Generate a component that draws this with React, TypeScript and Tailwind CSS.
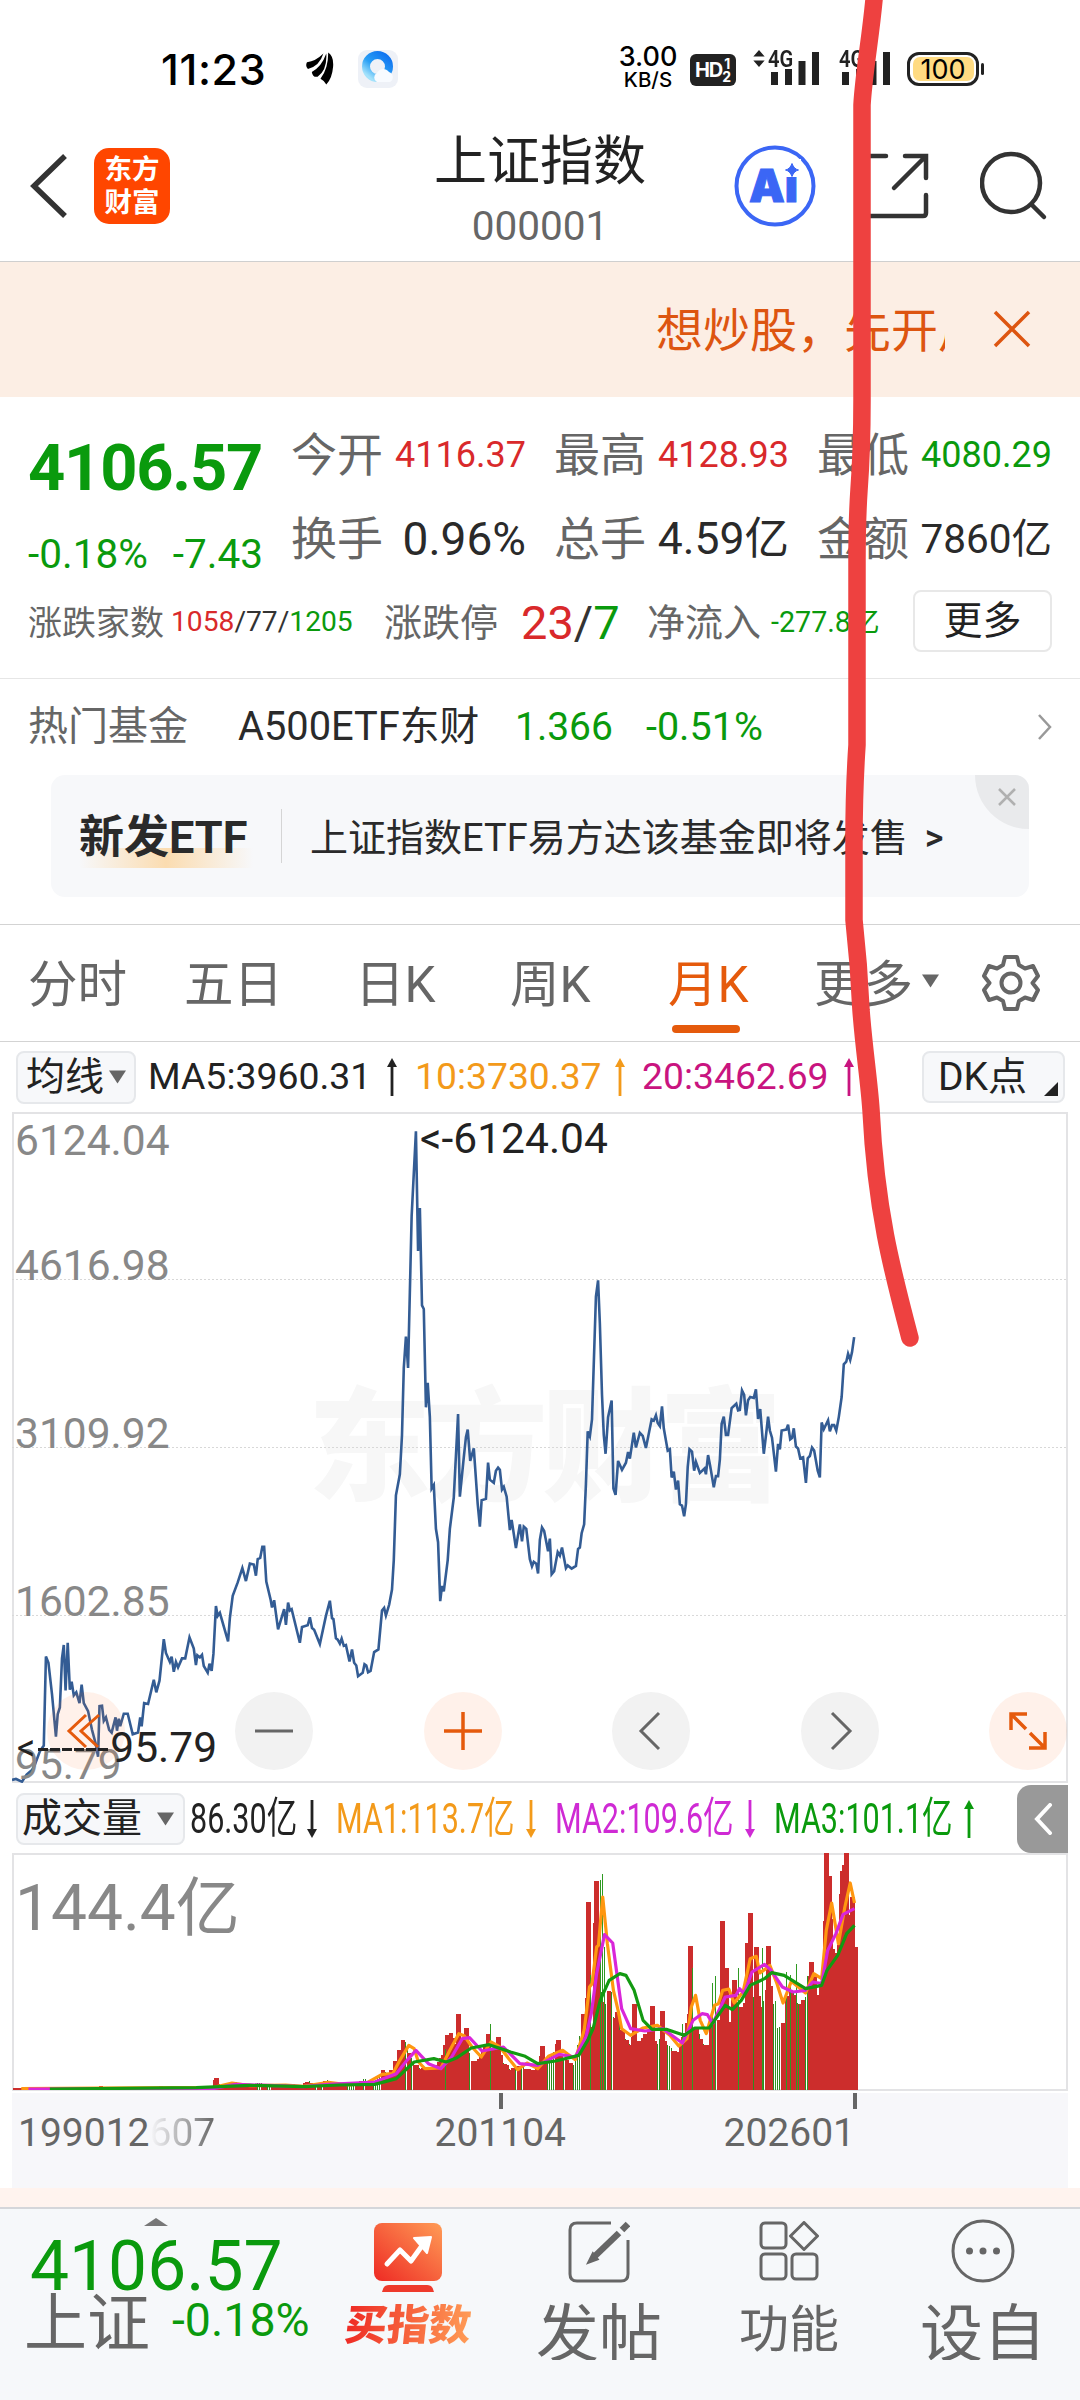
import React from 'react';

type Point = [number, number];

// Canvas units: 2.8 per px across, 2.24 (price) and 3 (volume) per px down
const HALF = 1456;

const join = (early: Point[], late: Point[]): Point[] => [
  ...early,
  ...late.map(([x, y]): Point => [x + HALF, y]),
];

const toPoints = (points: Point[]) => points.map((p) => p.join(',')).join(' ');

const PRICE = join(
  [
    [34, 1522], [45, 1520], [62, 1526], [75, 1510], [90, 1500], [98, 1488], [112, 1458], [123, 1445], [129, 1246], [136, 1260],
    [146, 1330], [157, 1425], [162, 1375], [168, 1360], [174, 1250], [179, 1220], [184, 1322], [190, 1215], [196, 1320], [201, 1302],
    [207, 1333], [214, 1326], [223, 1350], [229, 1309], [235, 1350], [247, 1368], [258, 1410], [268, 1440], [275, 1470], [279, 1357],
    [286, 1356], [291, 1390], [297, 1382], [306, 1410], [313, 1416], [324, 1382], [328, 1412], [333, 1385], [337, 1402], [347, 1374],
    [358, 1374], [372, 1420], [387, 1416], [393, 1382], [397, 1402], [404, 1350], [415, 1352], [431, 1298], [438, 1326], [447, 1300],
    [459, 1207], [465, 1238], [476, 1258], [481, 1246], [487, 1280], [493, 1258], [499, 1270], [510, 1250], [519, 1250], [531, 1203],
    [543, 1228], [549, 1265], [553, 1243], [560, 1248], [566, 1242], [571, 1267], [582, 1282], [587, 1262], [593, 1278], [598, 1240],
    [605, 1133], [610, 1155], [616, 1148], [639, 1212], [644, 1160], [652, 1110], [666, 1080], [679, 1048], [689, 1077], [700, 1038],
    [711, 1040], [717, 1065], [722, 1028], [729, 1025], [735, 1000], [740, 1000], [746, 1078], [758, 1118], [762, 1136], [768, 1120],
    [779, 1185], [796, 1140], [801, 1175], [807, 1125], [812, 1143], [817, 1140], [840, 1215], [846, 1180], [862, 1176], [868, 1158],
    [874, 1182], [880, 1186], [896, 1218], [913, 1155], [924, 1121], [930, 1160], [934, 1162], [941, 1205], [946, 1208], [952, 1217],
    [957, 1206], [963, 1222], [969, 1220], [979, 1257], [986, 1230], [992, 1260], [998, 1266], [1003, 1290], [1016, 1282], [1021, 1263],
    [1026, 1266], [1031, 1281], [1038, 1278], [1048, 1236], [1060, 1230], [1070, 1143], [1076, 1137], [1081, 1154], [1090, 1130], [1098, 1096],
    [1103, 1030], [1109, 885], [1120, 838], [1126, 750], [1131, 600], [1137, 530], [1143, 600], [1148, 430], [1153, 260], [1165, 70],
    [1171, 338], [1176, 242], [1182, 460], [1187, 468], [1193, 688], [1198, 633], [1204, 710], [1209, 870], [1215, 862], [1221, 960],
    [1227, 990], [1233, 1122], [1238, 1088], [1243, 1100], [1254, 1030], [1260, 960], [1271, 890], [1283, 703], [1288, 888], [1299, 800],
    [1305, 755], [1310, 738], [1317, 808], [1327, 780], [1338, 905], [1344, 955], [1349, 896], [1361, 893], [1367, 812], [1372, 850],
    [1383, 857], [1389, 830], [1395, 823], [1400, 828], [1406, 872], [1411, 866], [1419, 888], [1428, 963], [1433, 940], [1445, 1003],
    [1456, 950],
  ],
  [
    [6, 988], [11, 955], [18, 960], [28, 1028], [34, 1044], [39, 1034], [46, 1038], [51, 1060], [56, 985], [62, 957],
    [68, 965], [79, 1010], [84, 982], [89, 1062], [96, 1055], [106, 1012], [112, 1020], [118, 1002], [129, 1048], [134, 1042],
    [145, 1049], [157, 1043], [163, 1005], [168, 1002], [173, 970], [180, 950], [185, 860], [190, 742], [196, 753], [202, 715],
    [213, 440], [219, 404], [224, 500], [230, 660], [235, 750], [240, 792], [247, 710], [257, 673], [262, 870], [268, 884],
    [275, 808], [286, 828], [297, 812], [303, 788], [308, 803], [319, 745], [325, 778], [336, 745], [344, 752], [353, 779],
    [369, 715], [375, 718], [381, 706], [386, 723], [392, 730], [398, 686], [403, 735], [414, 785], [420, 782], [425, 845],
    [431, 832], [437, 872], [443, 852], [448, 905], [454, 908], [460, 932], [465, 905], [470, 822], [475, 782], [482, 787],
    [488, 830], [493, 810], [504, 835], [517, 825], [521, 838], [527, 795], [533, 820], [543, 867], [549, 842], [555, 842],
    [560, 805], [565, 725], [571, 709], [577, 750], [583, 750], [593, 690], [606, 680], [611, 695], [616, 694], [622, 650],
    [628, 660], [633, 706], [639, 672], [645, 665], [655, 667], [661, 648], [667, 714], [673, 692], [683, 792], [690, 745],
    [695, 709], [700, 740], [706, 756], [717, 832], [723, 770], [728, 782], [733, 740], [746, 738], [751, 727], [757, 760],
    [762, 757], [767, 735], [773, 776], [779, 780], [785, 802], [793, 800], [801, 857], [806, 802], [812, 797], [818, 778],
    [824, 785], [834, 830], [840, 845], [845, 722], [851, 737], [857, 727], [863, 717], [868, 742], [874, 728], [880, 728],
    [886, 740], [893, 710], [901, 665], [907, 592], [914, 586], [919, 568], [925, 582], [930, 565], [936, 531],
  ],
);

// Top outline of the turnover bars, as [x, height]
const TURNOVER = join(
  [
    [34, 5], [160, 5], [270, 5], [282, 12], [300, 5], [450, 10], [480, 6], [590, 7], [605, 34], [618, 12], [657, 24],
    [680, 11], [728, 24], [750, 10], [795, 20], [845, 12], [865, 30], [880, 10], [918, 32], [935, 16], [960, 18],
    [985, 10], [1008, 24], [1020, 40], [1035, 16], [1060, 42], [1071, 64], [1090, 44], [1108, 95], [1117, 128], [1134, 158],
    [1143, 130], [1155, 90], [1175, 70], [1200, 62], [1225, 80], [1238, 100], [1255, 178], [1268, 174], [1276, 140], [1284, 150],
    [1292, 140], [1306, 170], [1318, 90], [1340, 90], [1366, 150], [1378, 110], [1396, 150], [1406, 90], [1432, 62],
    [1456, 80],
  ],
  [
    [20, 64], [40, 60], [62, 120], [70, 84], [84, 114], [108, 140], [118, 100], [150, 80], [162, 160], [174, 208],
    [182, 280], [192, 300], [199, 200], [206, 460], [213, 530], [222, 500], [228, 290], [245, 270], [253, 350], [262, 220],
    [275, 240], [284, 180], [300, 155], [313, 140], [320, 180], [328, 140], [352, 170], [370, 200], [380, 140], [399, 190],
    [407, 150], [420, 140], [445, 110], [466, 200], [477, 240], [485, 190], [495, 200], [520, 130], [545, 235], [560, 220],
    [567, 300], [576, 300], [582, 200], [600, 310], [610, 250], [630, 280], [642, 430], [653, 300], [661, 360], [672, 270],
    [687, 300], [696, 350], [706, 300], [720, 200], [735, 210], [750, 300], [768, 320], [785, 240], [800, 310], [815, 370],
    [824, 370], [833, 280], [848, 330], [857, 600], [866, 600], [874, 480], [890, 385], [901, 655], [914, 660], [922, 520],
    [930, 580], [940, 427],
  ],
);

// Single months that stand clear of their neighbours
const PEAKS: Point[] = [
  [605, 34], [1284, 226], [1306, 186], [1367, 168], [1396, 158], [1518, 132], [1564, 150], [1648, 562], [1669, 625],
  [1776, 256], [1826, 250], [1855, 236], [1933, 430], [2023, 506], [2032, 364], [2056, 328], [2093, 440], [2101, 530],
  [2117, 428], [2152, 432], [2271, 382], [2313, 710], [2322, 640], [2357, 655], [2363, 674], [2370, 710], [2386, 578],
  [2395, 427],
];

// Down months tall enough to rise over the red ones
const SPIKES: Point[] = [
  [1245, 122], [1373, 198], [1653, 345], [1681, 630], [1687, 648], [1692, 428], [1911, 196], [1939, 366], [1995, 320],
  [2001, 342], [2067, 364], [2135, 426], [2202, 354], [2213, 344], [2230, 378], [2259, 342], [2169, 266], [2235, 256],
];

const MA_ORANGE = join(
  [
    [60, 1225], [600, 1221], [650, 1208], [700, 1216], [800, 1214], [850, 1218], [920, 1206], [980, 1214], [1030, 1206], [1070, 1182],
    [1100, 1180], [1120, 1140], [1145, 1095], [1160, 1105], [1172, 1145], [1190, 1165], [1235, 1163], [1260, 1110], [1285, 1060],
    [1300, 1066], [1322, 1100], [1348, 1130], [1375, 1085], [1400, 1100], [1425, 1135], [1450, 1168],
  ],
  [
    [20, 1148], [50, 1165], [80, 1128], [120, 1110], [155, 1138], [180, 1050], [195, 920], [202, 910], [215, 800], [220, 795],
    [232, 650], [245, 790], [262, 930], [275, 990], [285, 1045], [310, 1065], [345, 1043], [385, 1035], [420, 1065], [445, 1097],
    [468, 1075], [480, 980], [492, 945], [505, 1020], [522, 1060], [545, 975], [556, 970], [568, 930], [585, 926], [600, 968],
    [625, 935], [645, 835], [662, 828], [672, 878], [685, 868], [700, 855], [720, 910], [737, 968], [760, 903], [800, 938],
    [823, 880], [845, 895], [858, 750], [873, 668], [892, 790], [910, 680], [925, 608], [937, 668],
  ],
);

const MA_MAGENTA = join(
  [
    [80, 1226], [600, 1224], [660, 1212], [850, 1219], [920, 1212], [1050, 1205], [1110, 1180], [1140, 1140], [1165, 1110], [1200, 1150],
    [1235, 1165], [1265, 1130], [1295, 1075], [1315, 1072], [1350, 1112], [1410, 1100],
  ],
  [
    [0, 1150], [50, 1155], [110, 1122], [155, 1130], [185, 1070], [200, 1000], [215, 880], [237, 763], [260, 788], [285, 985],
    [310, 1045], [350, 1052], [400, 1045], [455, 1088], [485, 1020], [510, 1000], [525, 1003], [540, 1030], [575, 950], [605, 945],
    [615, 925], [628, 940], [650, 875], [685, 852], [702, 868], [735, 920], [765, 935], [800, 930], [820, 905], [845, 910],
    [862, 810], [885, 760], [905, 702], [937, 685],
  ],
);

const MA_GREEN = join(
  [
    [140, 1226], [550, 1222], [700, 1215], [850, 1219], [950, 1214], [1050, 1212], [1110, 1195], [1160, 1145], [1215, 1135], [1250, 1145],
    [1280, 1132], [1320, 1103], [1370, 1093], [1430, 1115],
  ],
  [
    [15, 1128], [50, 1150], [100, 1142], [165, 1125], [190, 1080], [205, 1045], [225, 960], [250, 900], [280, 880], [297, 885],
    [320, 930], [345, 1020], [370, 1047], [410, 1047], [460, 1065], [490, 1043], [530, 1043], [575, 975], [595, 988], [620, 960],
    [645, 915], [685, 895], [705, 877], [740, 885], [800, 925], [845, 915], [860, 870], [890, 825], [915, 760], [937, 735],
  ],
);

const heightAt = (x: number) => {
  const i = TURNOVER.findIndex((p) => p[0] >= x);
  if (i <= 0) return TURNOVER[i === 0 ? 0 : TURNOVER.length - 1][1];
  const [x0, h0] = TURNOVER[i - 1];
  const [x1, h1] = TURNOVER[i];
  return h0 + ((h1 - h0) * (x - x0)) / (x1 - x0);
};

const BARS = Array.from({ length: 421 }, (_, i) => {
  const x = 36.8 + i * 5.6;
  const down = (i * 7919 + i * i * 31) % 100 < 40 && i < 400;
  const dip = down ? 0.92 : 0.9 + ((i * 37) % 11) / 100;
  return { x, down, h: heightAt(x) * dip };
});

const snap = (x: number) => 34 + Math.round((x - 34) / 2.8) * 2.8;

const QUOTES = [
  ['今开', '4116.37', 'text-[#d9292b] text-[36px]'],
  ['最高', '4128.93', 'text-[#d9292b] text-[36px]'],
  ['最低', '4080.29', 'text-[#0a9a0d] text-[36px]'],
  ['换手', '0.96%', 'text-[#2a2a2a] text-[46px]'],
  ['总手', '4.59亿', 'text-[#2a2a2a] text-[44.500px]'],
  ['金额', '7860亿', 'text-[#2a2a2a] text-[40.500px]'],
];

const Caret = ({ className = '' }: { className?: string }) => (
  <svg viewBox="0 0 18 14" className={`h-[14px] w-[17px] shrink-0 ${className}`}>
    <path d="M0 0h18L9 14z" fill="#666" />
  </svg>
);

const Arrow = ({ up = false }: { up?: boolean }) => (
  <svg viewBox="0 0 12 38" className={`h-[38px] w-3 shrink-0 ${up ? '' : 'rotate-180'}`} fill="none">
    <path d="M6 4v34" stroke="currentColor" strokeWidth="2.8" />
    <path d="M6 0l5 9H1z" fill="currentColor" />
  </svg>
);

const Signal = ({ arrows = false }: { arrows?: boolean }) => (
  <div className="relative h-9 w-[50px]">
    <span className="absolute -left-[1px] -top-[4px] origin-left scale-x-[0.84] text-[24px] font-semibold leading-6 text-[#222]">4G</span>
    <svg viewBox="0 0 50 36" className="h-9 w-[50px]" fill="#222">
      <path d="M2 21h7v13H2zM16 18h7v16h-7zM29.500 10h7v24h-7zM43 1h7v33h-7z" />
    </svg>
    {arrows && (
      <svg viewBox="0 0 12 18" className="absolute -left-4 -top-px h-[17px] w-[12px]" fill="#222">
        <path d="M6 0l6 7H0zM6 18l6-7H0z" />
      </svg>
    )}
  </div>
);

const StatusBar = () => (
  <div className="flex h-[108px] items-center pl-[161px] pt-[30px] pr-[101px]">
    <span className="w-[108px] font-['Inter'] text-[43px] font-medium leading-none tracking-[0.6px] text-black">11:23</span>
    <svg viewBox="0 0 30 34" className="ml-[37px] h-[34px] w-[29px]" fill="#000">
      <path d="M1 10Q10 9 18 1Q14 14 2 17Q-1 14 1 10zM6 20Q16 15 21 1Q22 18 12 25Q7 26 6 20zM15 27Q23 17 23 0Q29 4 28 15Q27 27 21 33Q19 29 15 27z" />
    </svg>
    <svg viewBox="0 0 40 40" className="ml-[23px] h-10 w-10">
      <defs>
        <linearGradient id="cloud" x1="1" y1="0" x2="0.2" y2="1">
          <stop offset="0" stopColor="#0d6ff0" />
          <stop offset="0.6" stopColor="#2aa0f5" />
          <stop offset="1" stopColor="#a4e2fb" />
        </linearGradient>
      </defs>
      <rect width="40" height="38" y="1" rx="9" fill="#eef1f7" />
      <circle cx="19.500" cy="17.500" r="11.500" fill="none" stroke="url(#cloud)" strokeWidth="8" />
      <path d="M19 33a5 5 0 010-9 7 7 0 0112-1 5.500 5.500 0 011 10z" fill="#f8fbff" />
    </svg>
    <div className="flex-1" />
    <div className="mr-[12px] w-[60px] text-center font-['Inter'] font-medium text-black">
      <div className="-mt-[3px] text-[27px] leading-[24px]">3.00</div>
      <div className="text-[20.500px] leading-[21px]">KB/S</div>
    </div>
    <div className="mr-[33px] mt-[2px] flex h-[32px] w-[46px] items-center justify-center rounded-md bg-[#222] text-white">
      <span className="font-['Inter'] text-[20px] font-bold leading-none tracking-[-1px]">HD</span>
      <span className="flex flex-col font-['Inter'] text-[14px] font-bold leading-[13px]">
        <span className="pl-[2px]">1</span>
        <span>2</span>
      </span>
    </div>
    <Signal arrows />
    <div className="w-[21px]" />
    <Signal />
    <div className="relative ml-[17px] flex h-[34px] w-[72px] items-center justify-center rounded-[12px] border-[3px] border-[#222] bg-white">
      <div className="flex h-6 w-[61px] items-center justify-center rounded-[7px] bg-[#ffdb82] font-['Inter'] text-[27px] leading-none text-black">
        100
      </div>
      <div className="absolute -right-[8px] top-[8px] h-3 w-[3px] rounded bg-[#222]" />
    </div>
  </div>
);

const Header = () => (
  <header className="flex h-[154px] border-b border-[#cfcfcf] pl-[30px]">
    <svg viewBox="0 0 38 64" className="mt-[46px] h-16 w-[38px]" fill="none" stroke="#333" strokeWidth="5.500">
      <path d="M35 2L4 32l31 30" />
    </svg>
    <div className="ml-[26px] mt-[40px] flex h-[76px] w-[76px] flex-col items-center justify-center rounded-[15px] bg-[#ff4600] text-[27.500px] font-bold leading-[33px] text-white">
      <span>东方</span>
      <span>财富</span>
    </div>
    <div className="ml-[240px] flex w-[260px] flex-col items-center">
      <div className="mt-[25px] text-[53px] leading-[58px] text-[#222]">上证指数</div>
      <div className="mt-[12px] text-[40.500px] leading-[46px] text-[#666]">000001</div>
    </div>
    <svg viewBox="0 0 82 82" className="ml-[64px] mt-[37px] h-[82px] w-[82px]" fill="#3b66f5">
      <circle cx="41" cy="41" r="38.500" fill="none" stroke="#3b66f5" strokeWidth="4" />
      <text x="15" y="57" fontSize="45" fontWeight="900" fontFamily="Inter" stroke="#3b66f5" strokeWidth="1">
        Ai
      </text>
      <path d="M47 14h20v18H47z" fill="#fff" />
      <path d="M58 18.500q2 5.500 6.500 6.500-4.500 1-6.500 6.500-2-5.500-6.500-6.500 4.500-1 6.500-6.500z" stroke="#3b66f5" />
    </svg>
    <svg viewBox="0 0 68 68" className="ml-[47px] mt-[45px] h-[68px] w-[68px]" fill="none" stroke="#333" strokeWidth="4.500" strokeLinecap="round">
      <path d="M23 3H6Q3 3 3 6v54q0 3 3 3h54q3 0 3-3V42M42 3h21v22M62 4L31 35" />
    </svg>
    <svg viewBox="0 0 70 70" className="ml-[49px] mt-[43px] h-[70px] w-[70px]" fill="none" stroke="#333" strokeWidth="4.500" strokeLinecap="round">
      <circle cx="31" cy="32" r="29" />
      <path d="M52 54l12 12" />
    </svg>
  </header>
);

const NoticeBar = () => (
  <div className="flex h-[135px] items-center bg-[#fceee4] pl-[656px] text-[#dd5510]">
    <div className="mt-[3px] w-[289px] overflow-hidden whitespace-nowrap text-[47px] leading-[60px]">想炒股，先开户</div>
    <svg viewBox="0 0 38 38" className="ml-[48px] mt-[-2px] h-[38px] w-[38px]" fill="none" stroke="currentColor" strokeWidth="3.500">
      <path d="M2 2l34 34M36 2L2 36" />
    </svg>
  </div>
);

const Quote = () => (
  <section className="h-[282px] border-b border-[#e6e6e6] pl-[28px] pr-[28px] leading-none">
    <div className="flex">
      <div className="w-[263px] text-[#0a9a0d]">
        <div className="mt-[38px] text-[65px] font-bold leading-[66px] tracking-[-1.200px]">4106.57</div>
        <div className="mt-[31px] flex w-[235px] justify-between text-[40.500px] leading-[44px]">
          <span>-0.18%</span>
          <span>-7.43</span>
        </div>
      </div>
      <div className="mt-[16px] grid grid-cols-[235px_235px_235px] gap-x-[28px]">
        {QUOTES.map(([label, value, style]) => (
          <div key={label} className="flex h-[84px] items-center justify-between whitespace-nowrap">
            <span className="text-[46px] text-[#666]">{label}</span>
            <span className={style}>{value}</span>
          </div>
        ))}
      </div>
    </div>
    <div className="mt-[8px] flex h-[64px] items-center whitespace-nowrap text-[#666]">
      <span className="mt-[4px] w-[143px] text-[34px]">涨跌家数</span>
      <span className="mt-[2px] w-[213px] text-[28.200px] text-[#333]">
        <span className="text-[#d9292b]">1058</span>/77/<span className="text-[#0a9a0d]">1205</span>
      </span>
      <span className="mt-[3px] w-[137px] text-[38px]">涨跌停</span>
      <span className="mt-[2px] w-[126px] text-[47px] text-[#333]">
        <span className="text-[#d9292b]">23</span>/<span className="text-[#0a9a0d]">7</span>
      </span>
      <span className="mt-[3px] w-[124px] text-[38px]">净流入</span>
      <span className="mt-[2px] w-[142px] text-[28.700px] text-[#0a9a0d]">-277.8亿</span>
      <button className="flex h-[62px] w-[139px] items-center justify-center rounded-lg border-2 border-[#e8e8e8] text-[39px] text-[#222]">
        更多
      </button>
    </div>
  </section>
);

const HotFunds = () => (
  <section className="h-[246px] border-b border-[#d3d3d3]">
    <div className="flex h-[96px] items-center whitespace-nowrap pl-[28px] pr-[28px] text-[40px] leading-none text-[#0a9a0d]">
      <span className="w-[210px] text-[#666]">热门基金</span>
      <span className="w-[277px] text-[39.800px] text-[#2a2a2a]">A500ETF东财</span>
      <span className="w-[131px] text-[39px]">1.366</span>
      <span className="flex-1 text-[39.500px]">-0.51%</span>
      <svg viewBox="0 0 14 26" className="h-[26px] w-[14px]" fill="none" stroke="#999" strokeWidth="2.500">
        <path d="M1 1l11 12L1 25" />
      </svg>
    </div>
    <div className="relative ml-[51px] flex h-[122px] w-[978px] items-center overflow-hidden whitespace-nowrap rounded-[14px] bg-[#f7f8fa] pt-[4px] text-[#2a2a2a]">
      <div className="relative ml-[28px] w-[174px] text-[45px] font-bold leading-[56px]">
        <div className="absolute inset-x-0 bottom-[-2px] h-5 bg-[linear-gradient(90deg,#f7f8fa_0%,#fbdcb0_50%,#f7f8fa_100%)]" />
        <span className="relative">新发ETF</span>
      </div>
      <div className="-mt-[4px] ml-[28px] h-[54px] w-px bg-[#d5d5d5]" />
      <span className="ml-[28px] text-[38px]">上证指数ETF易方达该基金即将发售</span>
      <span className="ml-[17px] text-[36px] font-medium">&gt;</span>
      <div className="absolute right-0 top-0 h-[54px] w-[54px] rounded-bl-[54px] bg-[#e9eaec]">
        <svg viewBox="0 0 18 18" className="ml-[23px] mt-[13px] h-[18px] w-[18px]" stroke="#b0b0b0" strokeWidth="2.500">
          <path d="M1 1l16 16M17 1L1 17" />
        </svg>
      </div>
    </div>
  </section>
);

const PeriodTabs = () => (
  <nav className="flex h-[117px] items-center whitespace-nowrap border-b border-[#d3d3d3] pl-[28px] text-[49.500px] leading-none text-[#666]">
    <span className="mt-[6px] w-[156px]">分时</span>
    <span className="mt-[6px] w-[171px]">五日</span>
    <span className="mt-[6px] w-[155px]">日K</span>
    <span className="mt-[6px] w-[158px]">周K</span>
    <span className="relative mt-[6px] w-[146px] text-[#e55a0c]">
      月K
      <span className="absolute -bottom-[22px] left-[4px] h-2 w-[68px] rounded-full bg-[#e55a0c]" />
    </span>
    <span className="mt-[6px] w-[108px]">更多</span>
    <Caret className="-mt-1" />
    <svg viewBox="0 0 58 58" className="ml-[43px] h-[58px] w-[58px]" fill="none" stroke="#666" strokeWidth="4" strokeLinejoin="round">
      <path d="M23 3h12l2 8 6 3.500 8-2.500 5 10-5.500 7 5.500 7-5 10-8-2.500L37 47l-2 8H23l-2-8-6-3.500L7 46 2 36l5.500-7L2 22 7 12l8 2.500L21 11z" />
      <circle cx="29" cy="29" r="9.500" />
    </svg>
  </nav>
);

const AverageBar = () => (
  <div className="flex h-[70px] items-center whitespace-nowrap pl-[16px] leading-none text-[#222]">
    <div className="flex h-[53px] w-[120px] shrink-0 items-center rounded-lg border-2 border-[#e6e8eb] bg-[#f7f8fa] pl-[8px] text-[39px]">
      均线
      <Caret className="ml-[5px]" />
    </div>
    <div className="ml-[12px] flex w-[250px] items-center justify-between text-[37.400px]">
      <span>MA5:3960.31</span>
      <Arrow up />
    </div>
    <div className="ml-[17px] flex w-[211px] items-center justify-between text-[37.300px] text-[#f39a1a]">
      <span>10:3730.37</span>
      <Arrow up />
    </div>
    <div className="ml-[16px] flex w-[213px] items-center justify-between text-[37.300px] text-[#c9147f]">
      <span>20:3462.69</span>
      <Arrow up />
    </div>
    <div className="relative ml-[67px] flex h-[52px] w-[143px] shrink-0 items-center rounded-lg border-2 border-[#e6e8eb] bg-[#f7f8fa] pl-[14px] text-[39px]">
      DK点
      <svg viewBox="0 0 14 14" className="absolute bottom-[5px] right-[5px] h-[14px] w-[14px]">
        <path d="M14 0v14H0z" fill="#222" />
      </svg>
    </div>
  </div>
);

const RoundButton = ({ orange = false, children }: { orange?: boolean; children: React.ReactNode }) => (
  <div
    className={`flex h-[78px] w-[78px] items-center justify-center rounded-full ${
      orange ? 'bg-[#ff7a33]/10 text-[#e55a0c]' : 'bg-[#f2f2f2] text-[#666]'
    }`}
  >
    <svg viewBox="0 0 40 40" className="h-10 w-10" fill="none" stroke="currentColor" strokeWidth="3">
      {children}
    </svg>
  </div>
);

const PriceChart = () => (
  <div className="relative ml-[12px] h-[671px] w-[1056px] border-2 border-[#e3e3e5] text-[42.500px] leading-none text-[#888]">
    <div className="absolute left-[294px] top-[274px] text-[123px] font-black tracking-[-6px] text-[#f7f7f7]">东方财富</div>
    <svg viewBox="34 27 2954 1502" preserveAspectRatio="none" className="absolute -left-[2px] -top-[2px] h-[671px] w-[1055px]" fill="none">
      <g stroke="#d8d8d8" strokeDasharray="2 2">
        <path d="M34 402H2988M34 778H2988M34 1154H2988" vectorEffect="non-scaling-stroke" />
      </g>
      <polyline points={toPoints(PRICE)} stroke="#335c94" strokeWidth="2.600" vectorEffect="non-scaling-stroke" />
    </svg>
    <span className="absolute left-[1px] top-[6px]">6124.04</span>
    <span className="absolute left-[1px] top-[131px]">4616.98</span>
    <span className="absolute left-[1px] top-[299px]">3109.92</span>
    <span className="absolute left-[1px] top-[467px]">1602.85</span>
    <span className="absolute left-[1px] top-[630px]">95.79</span>
    <span className="absolute left-[406px] top-[4px] text-[#222]">&lt;-6124.04</span>
    <div className="absolute -right-[1px] left-[33px] top-[578px] flex justify-between">
      <RoundButton orange>
        <path d="M20 4L3 20l17 16M33 4L15 20l17 16" />
      </RoundButton>
      <RoundButton>
        <path d="M1 20h38" />
      </RoundButton>
      <RoundButton orange>
        <path d="M1 20h38M20 1v38" strokeWidth="3.500" />
      </RoundButton>
      <RoundButton>
        <path d="M28 2L10 20l18 18" />
      </RoundButton>
      <RoundButton>
        <path d="M12 2l18 18-18 18" />
      </RoundButton>
      <RoundButton orange>
        <path d="M3 19V3h16M3 3l15 15M37 21v16H21M37 37L22 22" strokeWidth="3.500" />
      </RoundButton>
    </div>
    <div className="absolute left-[3px] top-[613px] flex items-center whitespace-nowrap text-[#222]">
      <span className="text-[36px]">&lt;</span>
      <span className="ml-[3px] mt-[2px] h-[3px] w-[72px] bg-[repeating-linear-gradient(90deg,#222_0_10px,transparent_10px_12px)]" />
      <span>95.79</span>
    </div>
  </div>
);

const Narrow = ({ className, children }: { className: string; children: React.ReactNode }) => (
  <div className={`flex h-full items-center whitespace-nowrap ${className}`}>
    <span className="origin-left scale-x-[0.71] text-[43px]">{children}</span>
  </div>
);

const TurnoverBar = () => (
  <div className="flex h-[70px] items-center pl-[16px] pt-px leading-none text-[#222]">
    <div className="flex h-[52px] w-[169px] shrink-0 items-center whitespace-nowrap rounded-lg border-2 border-[#e6e8eb] bg-[#f7f8fa] pl-[4px] text-[40px]">
      成交量
      <Caret className="ml-[15px]" />
    </div>
    <Narrow className="ml-[5px] w-[116px]">86.30亿</Narrow>
    <Arrow />
    <div className="flex h-full items-center text-[#f39a1a]">
      <Narrow className="ml-[18px] w-[189px]">MA1:113.7亿</Narrow>
      <Arrow />
    </div>
    <div className="flex h-full items-center text-[#cf2ad4]">
      <Narrow className="ml-[18px] w-[189px]">MA2:109.6亿</Narrow>
      <Arrow />
    </div>
    <div className="flex h-full items-center text-[#0a9a0d]">
      <Narrow className="ml-[18px] w-[189px]">MA3:101.1亿</Narrow>
      <Arrow up />
    </div>
    <div className="ml-[42px] flex h-[68px] w-[51px] shrink-0 items-center justify-center rounded-l-[14px] bg-[#999]">
      <svg viewBox="0 0 20 32" className="h-8 w-5" fill="none" stroke="#fff" strokeWidth="4" strokeLinecap="round">
        <path d="M17 2L4 16l13 14" />
      </svg>
    </div>
  </div>
);

const TurnoverChart = () => (
  <div className="relative ml-[12px] h-[238px] w-[1056px] border-2 border-[#e3e3e5]">
    <span className="absolute left-[1px] top-[22px] text-[64px] leading-none text-[#888]">144.4亿</span>
    <svg viewBox="34 518 2954 711" preserveAspectRatio="none" className="absolute -left-[2px] -top-[2px] h-[237px] w-[1055px]" fill="none">
      <g shapeRendering="crispEdges">
        {BARS.map(({ x, h, down }) =>
          down ? (
            <rect key={x} x={x} y={1228 - h} width={2.8} height={h} fill="#2f8a1e" />
          ) : (
            <rect key={x} x={x - 5.6} y={1228 - h} width={11.2} height={h} fill="#cc2d2c" />
          ),
        )}
        {PEAKS.map(([x, h]) => (
          <rect key={x} x={snap(x) - 5.6} y={1228 - h} width={14} height={h} fill="#cc2d2c" />
        ))}
        {SPIKES.map(([x, h]) => (
          <rect key={x} x={snap(x)} y={1228 - h} width={2.8} height={h} fill="#2f9a22" />
        ))}
      </g>
      <g strokeWidth="3.200" strokeLinejoin="round">
        <polyline points={toPoints(MA_ORANGE)} stroke="#ff9710" vectorEffect="non-scaling-stroke" />
        <polyline points={toPoints(MA_MAGENTA)} stroke="#d926d9" vectorEffect="non-scaling-stroke" />
        <polyline points={toPoints(MA_GREEN)} stroke="#139a12" vectorEffect="non-scaling-stroke" />
      </g>
    </svg>
  </div>
);

const TimeAxis = () => (
  <div className="mx-[12px] h-[97px] border-t-2 border-white bg-[#f7f7fa] text-[39px] leading-none text-[#666]">
    <div className="flex h-4">
      <div className="ml-[487px] w-1 bg-[#666]" />
      <div className="ml-[350px] w-1 bg-[#666]" />
    </div>
    <div className="flex pt-[5px]">
      <span className="pl-[6px]">199012</span>
      <span className="w-[285px]">
        <span className="bg-[linear-gradient(90deg,#f7f7fa,#666)] bg-clip-text text-transparent">607</span>
      </span>
      <span className="w-[289px]">201104</span>
      <span>202601</span>
    </div>
  </div>
);

const BottomNav = () => (
  <footer className="flex h-[193px] overflow-hidden whitespace-nowrap border-t-2 border-[#d5d6da] bg-[#f6f8fa] text-[#666]">
    <div className="w-[343px] pl-[24px] leading-none">
      <svg viewBox="0 0 24 8" className="ml-[120px] mt-[9px] h-2 w-6" fill="#777">
        <path d="M12 0l12 8H0z" />
      </svg>
      <div className="mt-[8px] pl-[6px] text-[69.500px] leading-[66px] text-[#0a9a0d]">4106.57</div>
      <div className="-mt-[9px] flex items-center">
        <span className="w-[148px] text-[63px] leading-[66px]">上证</span>
        <span className="-mt-[8px] text-[46.500px] text-[#0a9a0d]">-0.18%</span>
      </div>
    </div>
    <div className="flex w-[130px] flex-col items-center">
      <svg viewBox="0 0 68 70" className="mt-[14px] h-[70px] w-[68px]">
        <defs>
          <linearGradient id="buy" x1="0" y1="1" x2="1" y2="0">
            <stop offset="0" stopColor="#ee2a24" />
            <stop offset="1" stopColor="#ff9c56" />
          </linearGradient>
        </defs>
        <rect width="68" height="58" rx="8" fill="url(#buy)" />
        <path d="M8 69q1-7 7-7h38q6 0 7 7z" fill="#ee3a2c" />
        <path d="M13 41l13-14 11 11 13-18" fill="none" stroke="#fff" strokeWidth="5" strokeLinecap="round" strokeLinejoin="round" />
        <path d="M40 15l17-1-4 16z" fill="#fff" stroke="#fff" strokeWidth="2" strokeLinejoin="round" />
      </svg>
      <span className="mt-[9px] -skew-x-6 bg-[linear-gradient(90deg,#ee2a24,#ff9c56)] bg-clip-text text-[42px] font-black leading-[48px] text-transparent">
        买指数
      </span>
    </div>
    <div className="ml-[63px] flex h-[151px] w-[126px] flex-col items-center overflow-hidden">
      <svg viewBox="0 0 62 62" className="mt-[12px] h-[62px] w-[62px] shrink-0" fill="none" stroke="#666" strokeWidth="3">
        <path d="M43 2H9Q2 2 2 9v44q0 7 7 7h44q7 0 7-7V19" />
        <path d="M51 12L27 35" strokeWidth="6.500" />
        <path d="M60 3l-6 6" strokeWidth="6.500" />
        <path d="M25 33l-4 8 8-3z" fill="#666" />
      </svg>
      <span className="mt-[15px] text-[63px] leading-[74px]">发帖</span>
    </div>
    <div className="ml-[77px] flex w-[100px] flex-col items-center">
      <svg viewBox="0 0 60 60" className="mt-[12px] h-[60px] w-[60px]" fill="none" stroke="#666" strokeWidth="3">
        <rect x="2" y="2" width="25" height="25" rx="4" />
        <rect x="2" y="33" width="25" height="25" rx="4" />
        <rect x="33" y="33" width="25" height="25" rx="4" />
        <path d="M45 1.500L58.500 15 45 28.500 31.500 15z" strokeLinejoin="round" />
      </svg>
      <span className="mt-[19px] text-[50px] leading-[60px]">功能</span>
    </div>
    <div className="ml-[81px] flex h-[151px] w-[126px] flex-col items-center overflow-hidden">
      <svg viewBox="0 0 64 64" className="mt-[10px] h-16 w-16 shrink-0" fill="none" stroke="#666" strokeWidth="3">
        <circle cx="32" cy="32" r="30" />
        <g fill="#666" stroke="none">
          <circle cx="18.500" cy="32" r="3.500" />
          <circle cx="32" cy="32" r="3.500" />
          <circle cx="45.500" cy="32" r="3.500" />
        </g>
      </svg>
      <span className="mt-[15px] text-[63px] leading-[74px]">设自</span>
    </div>
  </footer>
);

// Freehand marker line that runs over the whole screen
const Marker = () => (
  <svg viewBox="0 0 1080 2400" className="pointer-events-none absolute inset-0 h-[2400px] w-[1080px]" fill="none">
    <path
      d="M875 -12C872 30 864 70 862 105L862 400Q862 450 859 490Q857 520 857 560L857 745Q854 790 854 840L854 920Q859 965 861 1010C864 1050 869 1080 871 1110C876 1210 892 1270 910 1338"
      stroke="#ee4140"
      strokeWidth="17.500"
      strokeLinecap="round"
      strokeLinejoin="round"
    />
  </svg>
);

export default function App() {
  return (
    <div className="relative h-[2400px] w-[1080px] overflow-hidden bg-white font-['Roboto','Noto_Sans_CJK_SC',sans-serif]">
      <StatusBar />
      <Header />
      <NoticeBar />
      <Quote />
      <HotFunds />
      <PeriodTabs />
      <AverageBar />
      <PriceChart />
      <TurnoverBar />
      <TurnoverChart />
      <TimeAxis />
      <div className="h-[19px] bg-[#fff3ee]" />
      <BottomNav />
      <Marker />
    </div>
  );
}
